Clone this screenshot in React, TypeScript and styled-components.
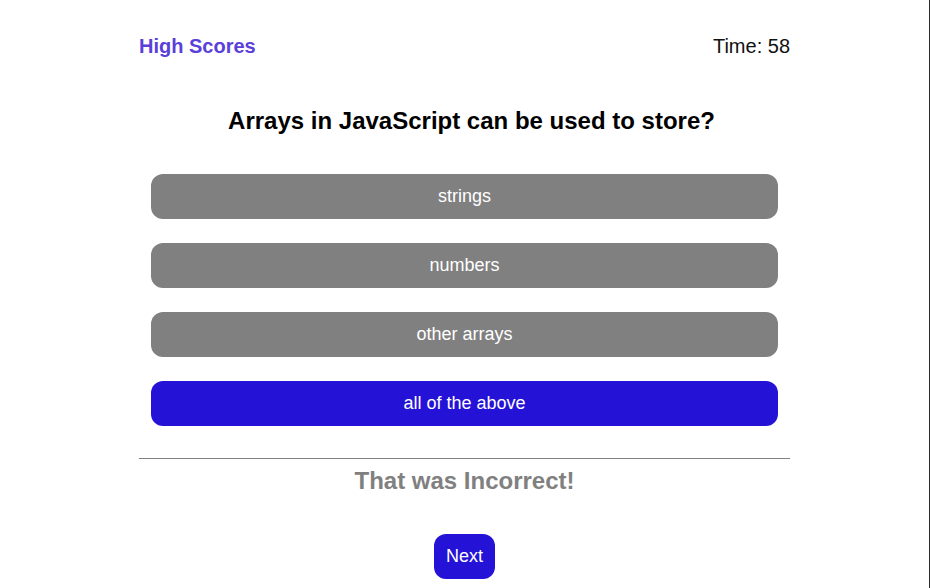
import React, { useState } from "react";
import styled, { createGlobalStyle } from "styled-components";

const GlobalStyle = createGlobalStyle`
  html, body {
    margin: 0;
    padding: 0;
    background: #ffffff;
  }

  body {
    font-family: "Liberation Sans", Arial, sans-serif;
    color: #111111;
  }
`;

const choices = ["strings", "numbers", "other arrays", "all of the above"];

export default function App() {
  const [selected, setSelected] = useState(3);

  return (
    <>
      <GlobalStyle />
      <Page>
        <Quiz>
          <Header>
            <ScoresLink href="#">High Scores</ScoresLink>
            <Timer>Time: 58</Timer>
          </Header>
          <Question>Arrays in JavaScript can be used to store?</Question>
          <ChoiceList>
            {choices.map((choice, i) => (
              <Choice key={choice} $active={i === selected} onClick={() => setSelected(i)}>
                {choice}
              </Choice>
            ))}
          </ChoiceList>
          <Divider />
          <Feedback>That was Incorrect!</Feedback>
          <NextButton>Next</NextButton>
        </Quiz>
      </Page>
    </>
  );
}

const Page = styled.div`
  min-height: 100vh;
  box-sizing: border-box;
  border-right: 1px solid #2b2b2b;
`;

const Quiz = styled.main`
  width: 651px;
  margin: 0 auto;
  display: flex;
  flex-direction: column;
  align-items: center;
`;

const Header = styled.header`
  width: 100%;
  display: flex;
  justify-content: space-between;
  align-items: center;
  padding-top: 34px;
  font-size: 20px;
  line-height: 24px;
`;

const ScoresLink = styled.a`
  color: #5a3fd9;
  font-weight: 700;
  text-decoration: none;
`;

const Timer = styled.span`
  color: #111111;
`;

const Question = styled.h2`
  margin: 49px 0 0 14px;
  font-size: 24px;
  line-height: 28px;
  font-weight: 700;
  color: #000000;
`;

const ChoiceList = styled.div`
  width: 627px;
  display: flex;
  flex-direction: column;
  gap: 24px;
  margin-top: 39px;
`;

const Choice = styled.button<{ $active?: boolean }>`
  height: 45px;
  border: none;
  border-radius: 12px;
  background: ${({ $active }) => ($active ? "#2412d6" : "#808080")};
  color: #ffffff;
  font-family: "Liberation Sans", Arial, sans-serif;
  font-size: 18px;
  cursor: pointer;
`;

const Divider = styled.hr`
  width: 100%;
  margin: 32px 0 0;
  border: none;
  border-top: 1px solid #808080;
`;

const Feedback = styled.p`
  margin: 9px 0 0;
  font-size: 24px;
  line-height: 26px;
  font-weight: 700;
  color: #808080;
`;

const NextButton = styled.button`
  margin-top: 40px;
  height: 45px;
  padding: 0 12px;
  border: none;
  border-radius: 12px;
  background: #2412d6;
  color: #ffffff;
  font-family: "Liberation Sans", Arial, sans-serif;
  font-size: 18px;
  cursor: pointer;
`;
